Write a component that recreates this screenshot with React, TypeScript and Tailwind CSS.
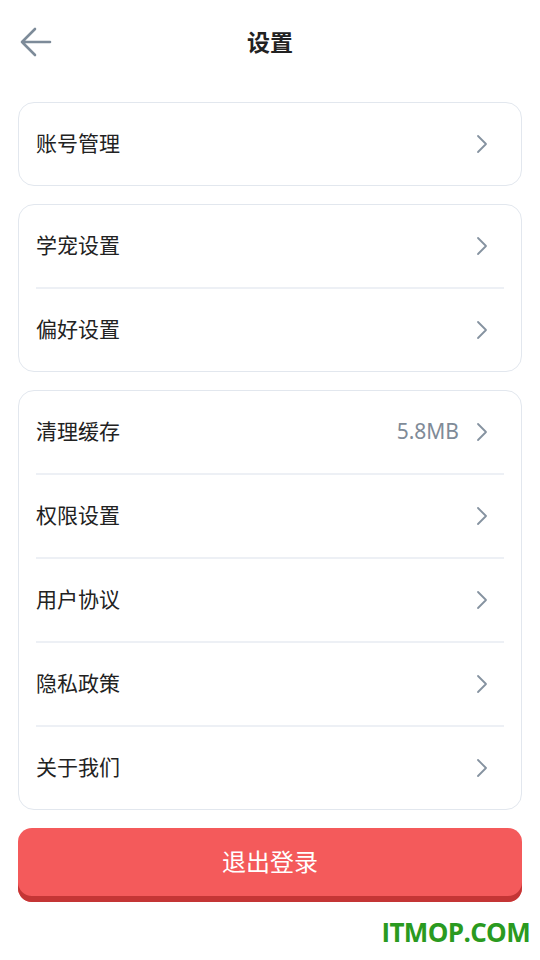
import React from 'react';

type Item = { label: string; value?: string };

const groups: Item[][] = [
  [{ label: '账号管理' }],
  [{ label: '学宠设置' }, { label: '偏好设置' }],
  [
    { label: '清理缓存', value: '5.8MB' },
    { label: '权限设置' },
    { label: '用户协议' },
    { label: '隐私政策' },
    { label: '关于我们' },
  ],
];

function Chevron() {
  return (
    <svg width="12" height="20" viewBox="0 0 12 20" fill="none">
      <path d="M2 2l8 8-8 8" stroke="#8592a0" strokeWidth="1.8" strokeLinecap="round" strokeLinejoin="round" />
    </svg>
  );
}

function Row({ item }: { item: Item }) {
  return (
    <div className="h-[82px] flex items-center px-[17px]">
      <span className="flex-1 text-[21px] text-[#222]">{item.label}</span>
      {item.value && <span className="text-[21px] text-[#7f8b98] mr-[17px]">{item.value}</span>}
      <span className="mr-[16px] flex items-center">
        <Chevron />
      </span>
    </div>
  );
}

export default function App() {
  return (
    <div className="w-[540px] h-[960px] bg-white flex flex-col font-['Noto_Sans','Noto_Sans_CJK_SC',sans-serif]">
      <div className="h-[84px] relative flex items-center justify-center">
        <svg className="absolute left-[19px] top-[27px]" width="34" height="30" viewBox="0 0 34 30" fill="none">
          <path d="M31 15H3M16 2L3 15l13 13" stroke="#7d8b99" strokeWidth="2.6" strokeLinecap="round" strokeLinejoin="round" />
        </svg>
        <h1 className="text-[23px] font-bold text-[#222]">设置</h1>
      </div>

      <div className="mt-[18px] px-[18px] flex flex-col gap-[18px]">
        {groups.map((group, gi) => (
          <div key={gi} className="border border-[#e2e7ee] rounded-[16px]">
            {group.map((item, i) => (
              <div key={item.label}>
                {i > 0 && <div className="mx-[17px] h-[2px] bg-[#edf0f5]" />}
                <Row item={item} />
              </div>
            ))}
          </div>
        ))}

        <button className="h-[74px] rounded-[14px] bg-[#f45a5b] shadow-[inset_0_-6px_0_#c43535] pb-[6px] text-white text-[24px]">
          退出登录
        </button>
      </div>

      <div className="mt-auto mb-[8px] pr-[10px] text-right text-[26px] font-bold text-[#2a9a20] font-['Open_Sans',sans-serif] tracking-tight">
        ITMOP.COM
      </div>
    </div>
  );
}
